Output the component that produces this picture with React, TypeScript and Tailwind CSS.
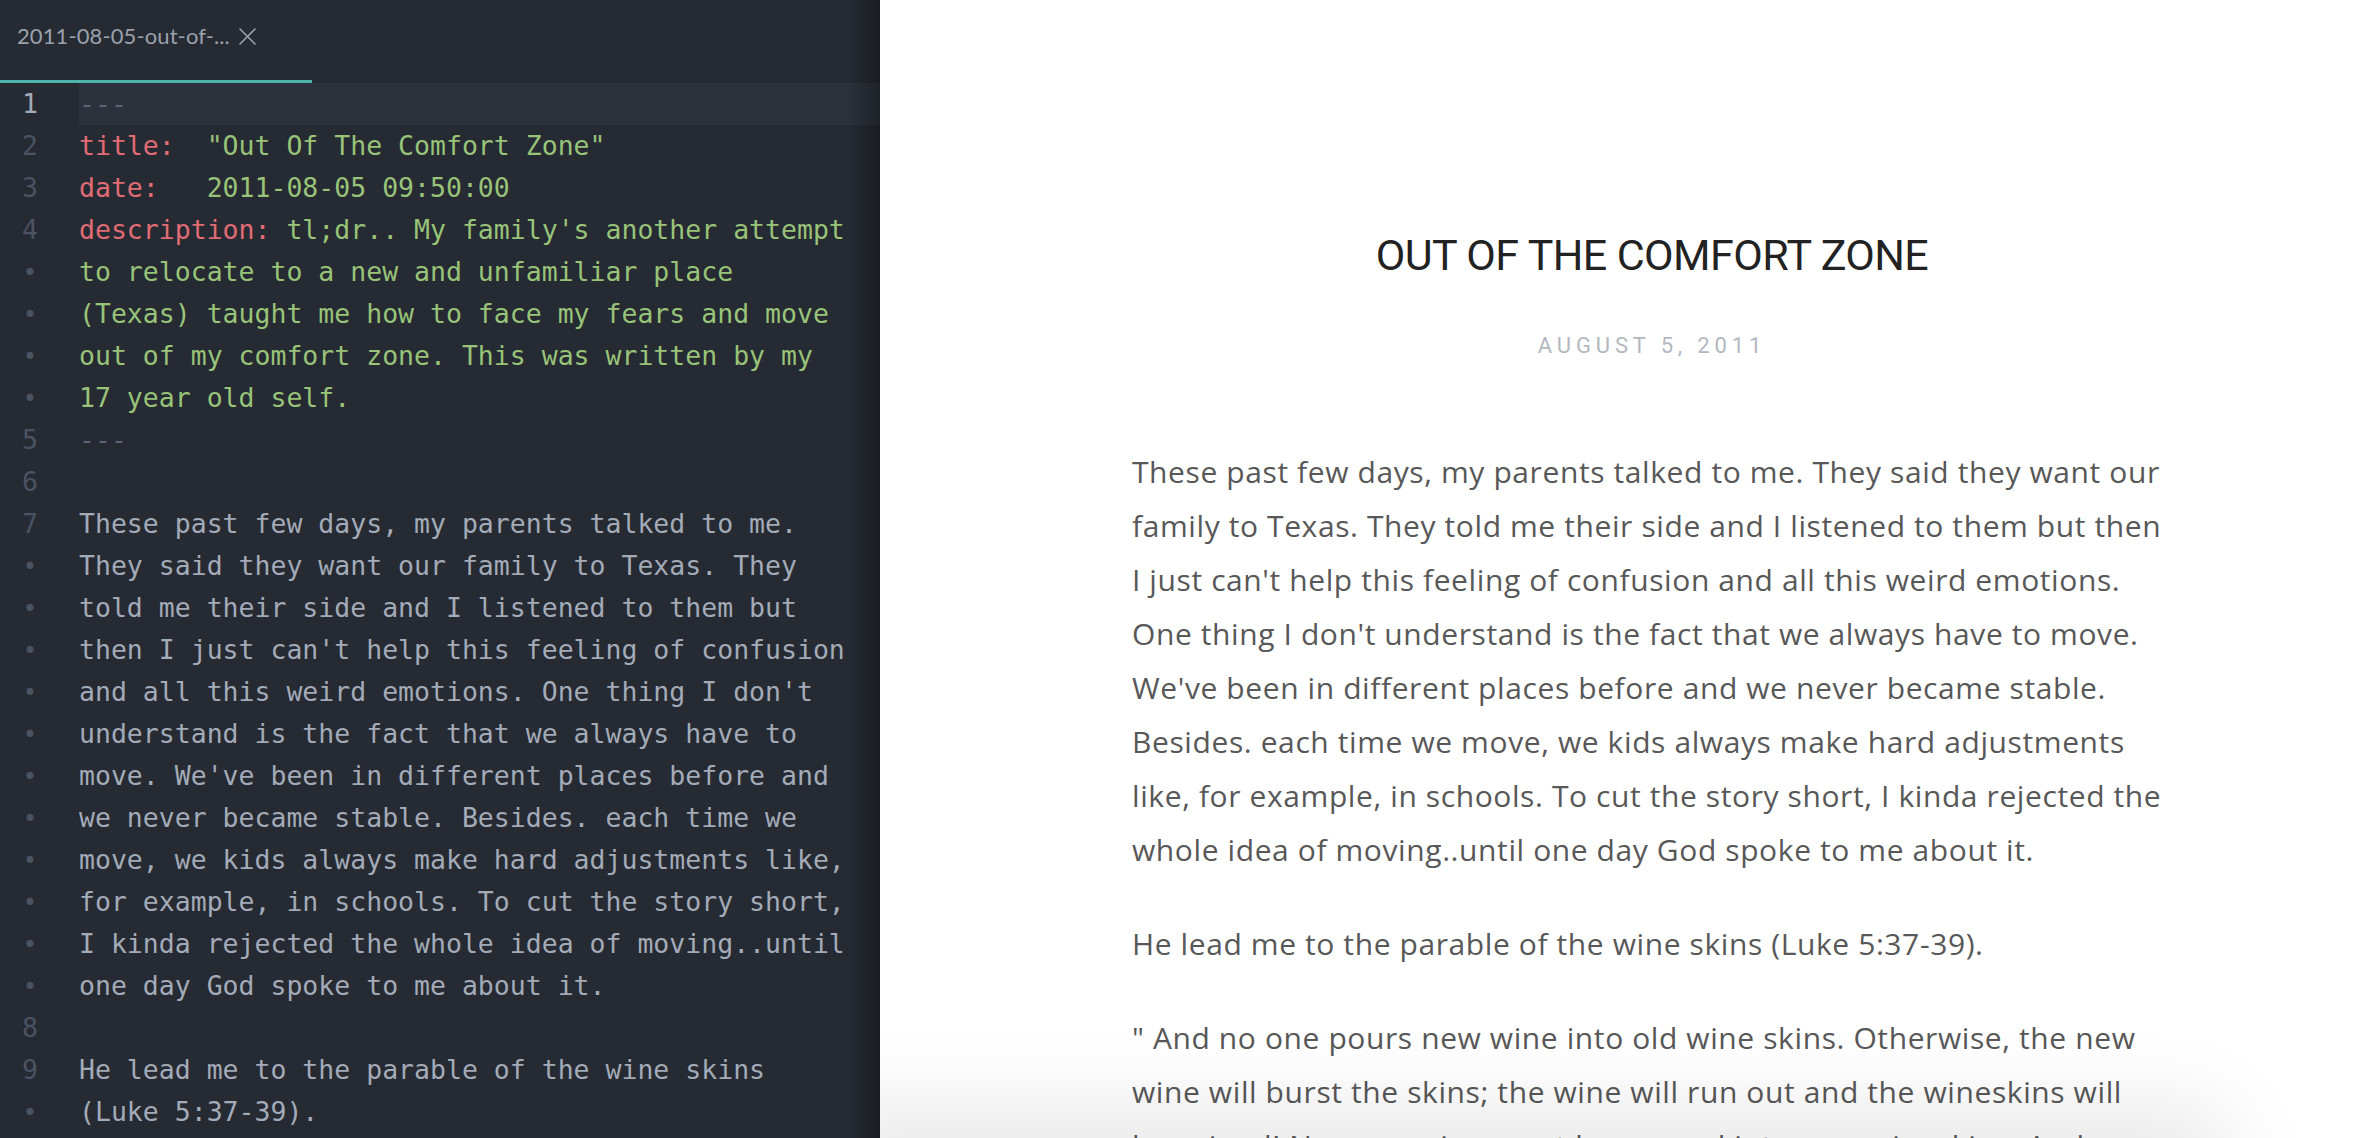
import React from 'react';

type Seg = { t: string; c?: string };
type Row = { num?: number; segs: Seg[] };

const KEY = 'text-[#e06c75]';
const STR = 'text-[#98c379]';
const DIM = 'text-[#5c6370]';

const rows: Row[] = [
  { num: 1, segs: [{ t: '---', c: DIM }] },
  { num: 2, segs: [{ t: 'title:', c: KEY }, { t: '  "Out Of The Comfort Zone"', c: STR }] },
  { num: 3, segs: [{ t: 'date:', c: KEY }, { t: '   2011-08-05 09:50:00', c: STR }] },
  { num: 4, segs: [{ t: 'description:', c: KEY }, { t: " tl;dr.. My family's another attempt", c: STR }] },
  { segs: [{ t: 'to relocate to a new and unfamiliar place', c: STR }] },
  { segs: [{ t: '(Texas) taught me how to face my fears and move', c: STR }] },
  { segs: [{ t: 'out of my comfort zone. This was written by my', c: STR }] },
  { segs: [{ t: '17 year old self.', c: STR }] },
  { num: 5, segs: [{ t: '---', c: DIM }] },
  { num: 6, segs: [] },
  { num: 7, segs: [{ t: 'These past few days, my parents talked to me.' }] },
  { segs: [{ t: 'They said they want our family to Texas. They' }] },
  { segs: [{ t: 'told me their side and I listened to them but' }] },
  { segs: [{ t: "then I just can't help this feeling of confusion" }] },
  { segs: [{ t: "and all this weird emotions. One thing I don't" }] },
  { segs: [{ t: 'understand is the fact that we always have to' }] },
  { segs: [{ t: "move. We've been in different places before and" }] },
  { segs: [{ t: 'we never became stable. Besides. each time we' }] },
  { segs: [{ t: 'move, we kids always make hard adjustments like,' }] },
  { segs: [{ t: 'for example, in schools. To cut the story short,' }] },
  { segs: [{ t: 'I kinda rejected the whole idea of moving..until' }] },
  { segs: [{ t: 'one day God spoke to me about it.' }] },
  { num: 8, segs: [] },
  { num: 9, segs: [{ t: 'He lead me to the parable of the wine skins' }] },
  { segs: [{ t: '(Luke 5:37-39).' }] },
];

const paragraphs: string[][] = [
  [
    'These past few days, my parents talked to me. They said they want our',
    'family to Texas. They told me their side and I listened to them but then',
    "I just can't help this feeling of confusion and all this weird emotions.",
    "One thing I don't understand is the fact that we always have to move.",
    "We've been in different places before and we never became stable.",
    'Besides. each time we move, we kids always make hard adjustments',
    'like, for example, in schools. To cut the story short, I kinda rejected the',
    'whole idea of moving..until one day God spoke to me about it.',
  ],
  ['He lead me to the parable of the wine skins (Luke 5:37-39).'],
  [
    '" And no one pours new wine into old wine skins. Otherwise, the new',
    'wine will burst the skins; the wine will run out and the wineskins will',
    'be ruined! No, new wine must be poured into new wineskins. And',
  ],
];

const Editor = () => (
  <div className="relative w-[880px] h-full shrink-0 bg-[#262a32] overflow-hidden">
    {/* tab bar */}
    <div className="h-[83px] flex items-start">
      <div className="w-[312px] h-[83px] border-b-[3px] border-[#4db6ac] flex items-start pt-[22px] pl-[17px]">
        <span className="text-[22px] leading-[28px] text-[#9aa1ad] font-['Lato',sans-serif] tracking-[0.1px]">
          2011-08-05-out-of-...
        </span>
        <svg className="ml-[8px] mt-[5px]" width="19" height="19" viewBox="0 0 19 19" fill="none" stroke="#9aa1ad" strokeWidth="1.6" strokeLinecap="round">
          <path d="M2 2 L17 17 M17 2 L2 17" />
        </svg>
      </div>
    </div>

    {/* code */}
    <div className="font-['DejaVu_Sans_Mono',monospace] text-[26.5px]">
      {rows.map((row, i) => (
        <div key={i} className="flex h-[42px] items-center">
          <div
            className={
              'w-[79px] h-full flex items-center pr-[19px] ' +
              (i === 0 ? 'text-[#a3abb8]' : 'text-[#4b5262]')
            }
          >
            <span className="w-[60px] text-center">
              {row.num !== undefined ? row.num : <span className="text-[24px]">•</span>}
            </span>
          </div>
          <div
            className={
              'flex-1 h-full flex items-center whitespace-pre text-[#a3abb8] ' +
              (i === 0 ? 'bg-[#2c313b]' : '')
            }
          >
            {row.segs.map((s, j) => (
              <span key={j} className={s.c}>
                {s.t}
              </span>
            ))}
          </div>
        </div>
      ))}
    </div>

    {/* edge shadow */}
    <div className="absolute top-0 right-0 h-full w-[34px] bg-gradient-to-r from-transparent to-black/30" />
  </div>
);

const Preview = () => (
  <div className="relative flex-1 h-full bg-white overflow-hidden">
    <div className="w-[1060px] ml-[252px] pt-[230px]">
      <h1 className="text-center uppercase text-[43px] leading-[50px] text-[#222222] font-['Roboto',sans-serif] tracking-[-0.6px] mr-[20px]">
        Out Of The Comfort Zone
      </h1>
      <div className="mt-[51px] text-center text-[22px] leading-[30px] tracking-[0.22em] text-[#b3b8bf] font-['Roboto',sans-serif] mr-[20px]">
        AUGUST 5, 2011
      </div>
      <div className="mt-[84px] text-[30px] leading-[54px] text-[#585858] font-['Open_Sans',sans-serif] tracking-[0.6px]">
        {paragraphs.map((p, i) => (
          <p key={i} className="mb-[40px] whitespace-nowrap">
            {p.map((line, j) => (
              <React.Fragment key={j}>
                {line}
                {j < p.length - 1 && <br />}
              </React.Fragment>
            ))}
          </p>
        ))}
      </div>
    </div>

    {/* bottom fade */}
    <div className="absolute left-[-40px] top-full w-[1360px] h-[40px] shadow-[0_0_90px_24px_rgba(0,0,0,0.11)]" />
  </div>
);

export default function App() {
  return (
    <div className="w-[2374px] h-[1138px] flex overflow-hidden">
      <Editor />
      <Preview />
    </div>
  );
}
